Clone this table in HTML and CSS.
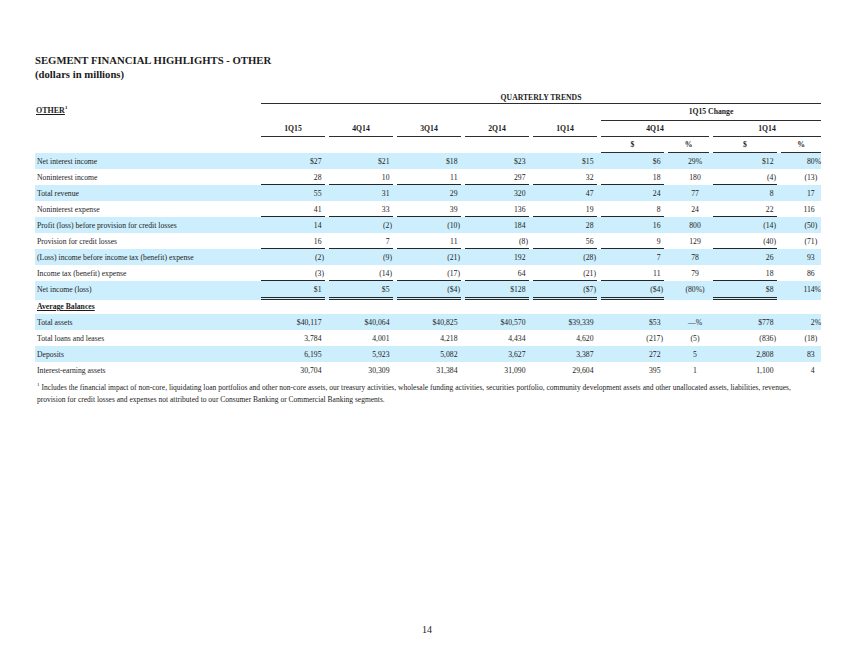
FILE: index.html
```html
<!DOCTYPE html>
<html lang="en">
<head>
    <meta charset="UTF-8">
    <title>Segment Financial Highlights - Other</title>
    <link rel="stylesheet" href="styles.css">
</head>
<body>
    <div class="sheet">
        <h1 class="title">SEGMENT FINANCIAL HIGHLIGHTS - OTHER<br>(dollars in millions)</h1>

        <table class="fin">
            <colgroup>
                <col class="c-lbl">
                <col class="c-q"><col class="c-q"><col class="c-q"><col class="c-q"><col class="c-q">
                <col class="c-d1"><col class="c-p1"><col class="c-d2"><col class="c-p2">
            </colgroup>
            <tr class="h1">
                <td></td>
                <th colspan="9" class="line">QUARTERLY TRENDS</th>
            </tr>
            <tr class="h2">
                <td class="seg"><span class="u">OTHER</span><sup>1</sup></td>
                <td colspan="5"></td>
                <th colspan="4" class="line">1Q15 Change</th>
            </tr>
            <tr class="h3">
                <td></td>
                <th class="line">1Q15</th>
                <th class="line">4Q14</th>
                <th class="line">3Q14</th>
                <th class="line">2Q14</th>
                <th class="line">1Q14</th>
                <th colspan="2" class="line">4Q14</th>
                <th colspan="2" class="line">1Q14</th>
            </tr>
            <tr class="h4">
                <td colspan="6"></td>
                <th class="line">$</th>
                <th class="line">%</th>
                <th class="line">$</th>
                <th class="line">%</th>
            </tr>

            <tr class="d band">
                <td class="lbl">Net interest income</td>
                <td>$27</td><td>$21</td><td>$18</td><td>$23</td><td>$15</td>
                <td>$6</td><td class="c">29%</td><td>$12</td><td class="r pc">80%</td>
            </tr>
            <tr class="d ul">
                <td class="lbl">Noninterest income</td>
                <td>28</td><td>10</td><td>11</td><td>297</td><td>32</td>
                <td>18</td><td class="c">180</td><td class="neg">(4)</td><td class="r neg">(13)</td>
            </tr>
            <tr class="d band">
                <td class="lbl">Total revenue</td>
                <td>55</td><td>31</td><td>29</td><td>320</td><td>47</td>
                <td>24</td><td class="c">77</td><td>8</td><td class="r">17</td>
            </tr>
            <tr class="d ul">
                <td class="lbl">Noninterest expense</td>
                <td>41</td><td>33</td><td>39</td><td>136</td><td>19</td>
                <td>8</td><td class="c">24</td><td>22</td><td class="r">116</td>
            </tr>
            <tr class="d band">
                <td class="lbl">Profit (loss) before provision for credit losses</td>
                <td>14</td><td class="neg">(2)</td><td class="neg">(10)</td><td>184</td><td>28</td>
                <td>16</td><td class="c">800</td><td class="neg">(14)</td><td class="r neg">(50)</td>
            </tr>
            <tr class="d ul">
                <td class="lbl">Provision for credit losses</td>
                <td>16</td><td>7</td><td>11</td><td class="neg">(8)</td><td>56</td>
                <td>9</td><td class="c">129</td><td class="neg">(40)</td><td class="r neg">(71)</td>
            </tr>
            <tr class="d band">
                <td class="lbl">(Loss) income before income tax (benefit) expense</td>
                <td class="neg">(2)</td><td class="neg">(9)</td><td class="neg">(21)</td><td>192</td><td class="neg">(28)</td>
                <td>7</td><td class="c">78</td><td>26</td><td class="r">93</td>
            </tr>
            <tr class="d ul">
                <td class="lbl">Income tax (benefit) expense</td>
                <td class="neg">(3)</td><td class="neg">(14)</td><td class="neg">(17)</td><td>64</td><td class="neg">(21)</td>
                <td>11</td><td class="c">79</td><td>18</td><td class="r">86</td>
            </tr>
            <tr class="d band dbl">
                <td class="lbl">Net income (loss)</td>
                <td>$1</td><td>$5</td><td class="neg">($4)</td><td>$128</td><td class="neg">($7)</td>
                <td class="neg">($4)</td><td class="c">(80%)</td><td>$8</td><td class="r pc">114%</td>
            </tr>

            <tr class="sub">
                <td class="lbl"><span class="u">Average Balances</span></td>
                <td colspan="9"></td>
            </tr>
            <tr class="d band">
                <td class="lbl">Total assets</td>
                <td>$40,117</td><td>$40,064</td><td>$40,825</td><td>$40,570</td><td>$39,339</td>
                <td>$53</td><td class="c">—%</td><td>$778</td><td class="r pc">2%</td>
            </tr>
            <tr class="d">
                <td class="lbl">Total loans and leases</td>
                <td>3,784</td><td>4,001</td><td>4,218</td><td>4,434</td><td>4,620</td>
                <td class="neg">(217)</td><td class="c">(5)</td><td class="neg">(836)</td><td class="r neg">(18)</td>
            </tr>
            <tr class="d band">
                <td class="lbl">Deposits</td>
                <td>6,195</td><td>5,923</td><td>5,082</td><td>3,627</td><td>3,387</td>
                <td>272</td><td class="c">5</td><td>2,808</td><td class="r">83</td>
            </tr>
            <tr class="d">
                <td class="lbl">Interest-earning assets</td>
                <td>30,704</td><td>30,309</td><td>31,384</td><td>31,090</td><td>29,604</td>
                <td>395</td><td class="c">1</td><td>1,100</td><td class="r">4</td>
            </tr>
        </table>

        <p class="note"><sup>1</sup> Includes the financial impact of non-core, liquidating loan portfolios and other non-core assets, our treasury activities, wholesale funding activities, securities portfolio, community development assets and other unallocated assets, liabilities, revenues,<br>provision for credit losses and expenses not attributed to our Consumer Banking or Commercial Banking segments.</p>
    </div>

    <div class="pageno">14</div>
</body>
</html>
```

FILE: styles.css
```css
html, body {
    margin: 0;
    padding: 0;
}
body {
    width: 854px;
    height: 660px;
    display: flex;
    flex-direction: column;
    font-family: "Liberation Serif", "Times New Roman", serif;
    color: #1c1c1c;
    background: #fff;
}
.sheet {
    padding: 53px 0 0 35px;
}
.title {
    margin: 0 0 11px;
    font-size: 10.7px;
    line-height: 14px;
    font-weight: bold;
}

/* table */
.fin {
    width: 786px;
    border-collapse: collapse;
    border-spacing: 0;
    table-layout: fixed;
    font-size: 7.7px;
}
.c-lbl { width: 222px; }
.c-q { width: 68px; }
.c-d1 { width: 67px; }
.c-p1 { width: 45px; }
.c-d2 { width: 68px; }
.c-p2 { width: 44px; }

.fin th {
    font-weight: bold;
    text-align: center;
    padding: 0 0 0 4px;
    white-space: nowrap;
}
.fin td {
    padding: 0;
    white-space: nowrap;
}
.fin .line {
    background: linear-gradient(#2e2e2e, #2e2e2e) right bottom / calc(100% - 4px) 1.5px no-repeat;
}
.h1 { height: 12px; }
.h1 th { line-height: 11px; padding-bottom: 1px; }
.h2 { height: 17px; }
.h2 th { line-height: 14px; vertical-align: bottom; padding-bottom: 2px; }
.h3, .h4 { height: 16px; }
.h3 th, .h4 th { line-height: 14px; padding-bottom: 1px; }

.seg {
    vertical-align: top;
    padding-top: 1px !important;
    padding-left: 1px !important;
    font-size: 8px;
    line-height: 12px;
    font-weight: bold;
}
.u {
    text-decoration: underline;
}
sup {
    font-size: 5px;
    vertical-align: top;
    line-height: 5px;
}

/* data rows */
.d { height: 16px; }
.d td {
    padding: 2px 3.5px 0 0;
    line-height: 14px;
    vertical-align: top;
    text-align: right;
}
.d td.lbl {
    text-align: left;
    padding-left: 2px;
}
.d td.neg { padding-right: 1px; }
.d td.c {
    text-align: center;
    padding: 2px 0 0 17px;
}
.d td.r { padding-right: 6.4px; }
.d td.r.neg { padding-right: 3.8px; }
.d td.r.pc { padding-right: 0; }

.band { background: #cdeefc; }

.ul td:not(.lbl):not(.c):not(.r) {
    background: linear-gradient(#262626, #262626) right bottom / calc(100% - 4px) 1.5px no-repeat;
}
.d.dbl { height: 19px; }
.dbl td:not(.lbl):not(.c):not(.r) {
    background:
        linear-gradient(#262626, #262626) right 0 bottom 0 / calc(100% - 4px) 1px no-repeat,
        linear-gradient(#262626, #262626) right 0 bottom 2px / calc(100% - 4px) 1px no-repeat;
}

.sub { height: 14px; }
.sub td {
    padding: 0;
    line-height: 14px;
}
.sub td.lbl {
    padding-left: 2px;
    font-weight: bold;
}

/* footnote */
.note {
    margin: 4px 0 0;
    padding-left: 2px;
    font-size: 7.52px;
    line-height: 12px;
    white-space: nowrap;
}

.pageno {
    margin-top: auto;
    margin-bottom: 24px;
    text-align: center;
    font-size: 10px;
    line-height: 12px;
}
```
